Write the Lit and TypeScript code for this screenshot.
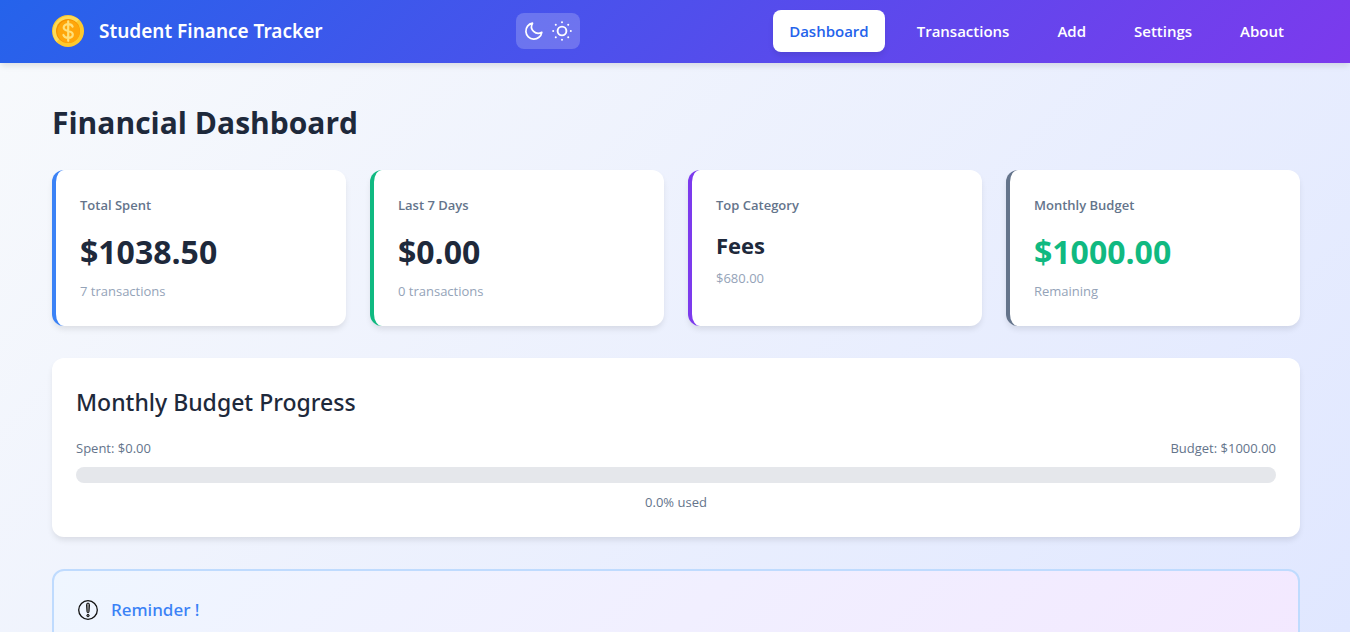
import { LitElement, html, css, svg } from "lit";
import { customElement, property, state } from "lit/decorators.js";
import { classMap } from "lit/directives/class-map.js";

interface Stat {
  label: string;
  value: string;
  note: string;
  tone: string;
  compact?: boolean;
  positive?: boolean;
}

const STATS: Stat[] = [
  { label: "Total Spent", value: "$1038.50", note: "7 transactions", tone: "blue" },
  { label: "Last 7 Days", value: "$0.00", note: "0 transactions", tone: "green" },
  { label: "Top Category", value: "Fees", note: "$680.00", tone: "violet", compact: true },
  { label: "Monthly Budget", value: "$1000.00", note: "Remaining", tone: "slate", positive: true },
];

const PAGES = ["Dashboard", "Transactions", "Add", "Settings", "About"];

const coinIcon = html`<svg class="coin" viewBox="0 0 32 32" aria-hidden="true">
  <circle cx="16" cy="16" r="16" fill="#fdc92e" />
  <path d="M4.5 27A16 16 0 0 1 27 4.500z" fill="#ffdb57" />
  <circle cx="16" cy="16" r="12" fill="#f59300" />
  <circle cx="16.600" cy="16.600" r="11.300" fill="#ffa60a" />
  <path
    d="M20.600 11.700C20 10 18.400 9.200 16.200 9.200c-2.700 0-4.500 1.300-4.500 3.300 0 2.300 2 2.900 4.500 3.500s4.600 1.300 4.600 3.600c0 2.100-1.900 3.300-4.600 3.300-2.500 0-4.200-1-4.800-2.900M16.200 6.300v19.500"
    fill="none" stroke="#ffe07a" stroke-width="2.200" stroke-linecap="round" />
</svg>`;

const moonIcon = html`<svg class="glyph" viewBox="0 0 20 20" aria-hidden="true">
  <path d="M8.500 2.200A8 8 0 1 0 17.800 11.300A6.700 6.700 0 0 1 8.500 2.200z"
    fill="none" stroke="currentColor" stroke-width="1.700" stroke-linejoin="round" />
</svg>`;

const sunIcon = html`<svg class="glyph" viewBox="0 0 20 20" aria-hidden="true">
  <circle cx="10" cy="10" r="4.400" fill="none" stroke="currentColor" stroke-width="1.900" />
  ${[0, 45, 90, 135, 180, 225, 270, 315].map(
    (a) => svg`<circle cx="10" cy="1.200" r="1" fill="currentColor" transform="rotate(${a} 10 10)" />`
  )}
</svg>`;

const alertIcon = html`<svg class="alert" viewBox="0 0 20 20" aria-hidden="true">
  <circle cx="10" cy="10" r="9.300" fill="none" stroke="#111" stroke-width="1.300" />
  <path d="M8.500 4.600a1.500 1.500 0 0 1 3 0L11 11.800a1 1 0 0 1-2 0z" fill="#888" stroke="#111" stroke-width="1" />
  <circle cx="10" cy="15.600" r="1.200" fill="#777" stroke="#111" stroke-width="1" />
</svg>`;

@customElement("stat-card")
class StatCard extends LitElement {
  @property({ attribute: false }) stat!: Stat;

  static styles = css`
    :host { display: block; }
    .card {
      box-sizing: border-box;
      height: 100%;
      padding: 24px;
      background: #fff;
      border-left: 4px solid;
      border-radius: 12px;
      box-shadow: 0 4px 6px -1px rgba(0, 0, 0, 0.1);
    }
    .blue { border-color: #3b82f6; }
    .green { border-color: #10b981; }
    .violet { border-color: #7c3aed; }
    .slate { border-color: #64748b; }
    .label {
      margin: 0 0 12px;
      font-size: 13px;
      line-height: 22px;
      font-weight: 600;
      color: #64748b;
    }
    .value {
      margin: 0 0 4px;
      font-size: 32px;
      line-height: 48px;
      font-weight: 700;
      color: #1e293b;
    }
    .compact { font-size: 22px; line-height: 35px; }
    .positive { color: #10b981; }
    .note { margin: 0; font-size: 13px; line-height: 22px; color: #94a3b8; }
  `;

  render() {
    const s = this.stat;
    return html`<article class="card ${s.tone}">
      <h2 class="label">${s.label}</h2>
      <p class=${classMap({ value: true, compact: !!s.compact, positive: !!s.positive })}>${s.value}</p>
      <p class="note">${s.note}</p>
    </article>`;
  }
}

@customElement("app-root")
class AppRoot extends LitElement {
  @state() private page = "Dashboard";
  @state() private dark = false;

  static styles = css`
    :host {
      display: block;
      height: 100vh;
      overflow-y: auto;
      scrollbar-width: none;
      background: linear-gradient(135deg, #f8fafc 0%, #e0e7ff 100%);
      color: #1e293b;
      font-family: "Segoe UI", "Open Sans", "Noto Sans", sans-serif;
    }
    .bar {
      display: flex;
      align-items: center;
      justify-content: space-between;
      padding: 10px 50px 11px 52px;
      background: linear-gradient(135deg, #2563eb 0%, #7c3aed 100%);
      box-shadow: 0 4px 6px -1px rgba(0, 0, 0, 0.1);
      color: #fff;
    }
    .brand { display: flex; align-items: center; gap: 15px; }
    .coin { display: block; width: 32px; height: 32px; }
    .title, .subheading, .notice { font-family: "Segoe UI", "Noto Sans", sans-serif; font-weight: 500; }
    .title { font-size: 19px; line-height: 32px; font-weight: 600; }
    .theme {
      display: flex;
      align-items: center;
      gap: 8px;
      height: 36px;
      padding: 0 8px;
      border: 0;
      border-radius: 8px;
      background: rgba(255, 255, 255, 0.2);
      color: #fff;
      cursor: pointer;
    }
    .glyph { display: block; width: 20px; height: 20px; }
    .nav { display: flex; gap: 16px; }
    .link {
      padding: 8px 16px;
      border-radius: 8px;
      font-size: 15px;
      line-height: 26px;
      font-weight: 600;
      color: #fff;
      text-decoration: none;
    }
    .current {
      background: #fff;
      color: #2563eb;
      box-shadow: 0 4px 6px -1px rgba(0, 0, 0, 0.1);
    }
    .main { padding: 32px 50px 32px 52px; }
    .heading { margin: 0 0 20px; font-size: 30px; line-height: 55px; font-weight: 700; }
    .stats {
      display: grid;
      grid-template-columns: repeat(auto-fit, minmax(240px, 1fr));
      gap: 24px;
      margin-bottom: 32px;
    }
    .panel {
      padding: 24px;
      margin-bottom: 32px;
      background: #fff;
      border-radius: 12px;
      box-shadow: 0 4px 6px -1px rgba(0, 0, 0, 0.1);
    }
    .subheading { margin: 0 0 14px; font-size: 23px; line-height: 41px; }
    .figures {
      display: flex;
      justify-content: space-between;
      margin-bottom: 8px;
      font-size: 13px;
      line-height: 22px;
      color: #64748b;
    }
    .track { height: 16px; margin-bottom: 8px; border-radius: 8px; background: #e5e7eb; overflow: hidden; }
    .fill { height: 100%; background: #10b981; }
    .used { margin: 0; font-size: 13px; line-height: 22px; text-align: center; color: #64748b; }
    .reminder {
      padding: 24px 24px 64px;
      border: 2px solid #bfdbfe;
      border-radius: 12px;
      background: linear-gradient(135deg, #eff6ff 0%, #f3e8ff 100%);
    }
    .notice {
      display: flex;
      align-items: center;
      gap: 13px;
      margin: 0;
      font-size: 17px;
      line-height: 29px;
      color: #3b82f6;
    }
    .alert { display: block; width: 20px; height: 20px; }
  `;

  render() {
    const used = 0;
    return html`
      <header class="bar">
        <div class="brand">${coinIcon}<span class="title">Student Finance Tracker</span></div>
        <button class="theme" type="button" aria-label="Toggle theme" aria-pressed=${this.dark ? "true" : "false"}
          @click=${() => (this.dark = !this.dark)}>${moonIcon}${sunIcon}</button>
        <nav class="nav">
          ${PAGES.map((p) => html`<a href="#${p.toLowerCase()}"
            class=${classMap({ link: true, current: p === this.page })}
            @click=${() => (this.page = p)}>${p}</a>`)}
        </nav>
      </header>
      <main class="main">
        <h1 class="heading">Financial Dashboard</h1>
        <section class="stats">
          ${STATS.map((s) => html`<stat-card .stat=${s}></stat-card>`)}
        </section>
        <section class="panel">
          <h2 class="subheading">Monthly Budget Progress</h2>
          <div class="figures"><span>Spent: $0.00</span><span>Budget: $1000.00</span></div>
          <div class="track" role="progressbar" aria-label="Budget used" aria-valuenow=${used}
            aria-valuemin="0" aria-valuemax="100"><div class="fill" style="width:${used}%"></div></div>
          <p class="used">${used.toFixed(1)}% used</p>
        </section>
        <section class="reminder">
          <h2 class="notice">${alertIcon}<span>Reminder !</span></h2>
        </section>
      </main>
    `;
  }
}
